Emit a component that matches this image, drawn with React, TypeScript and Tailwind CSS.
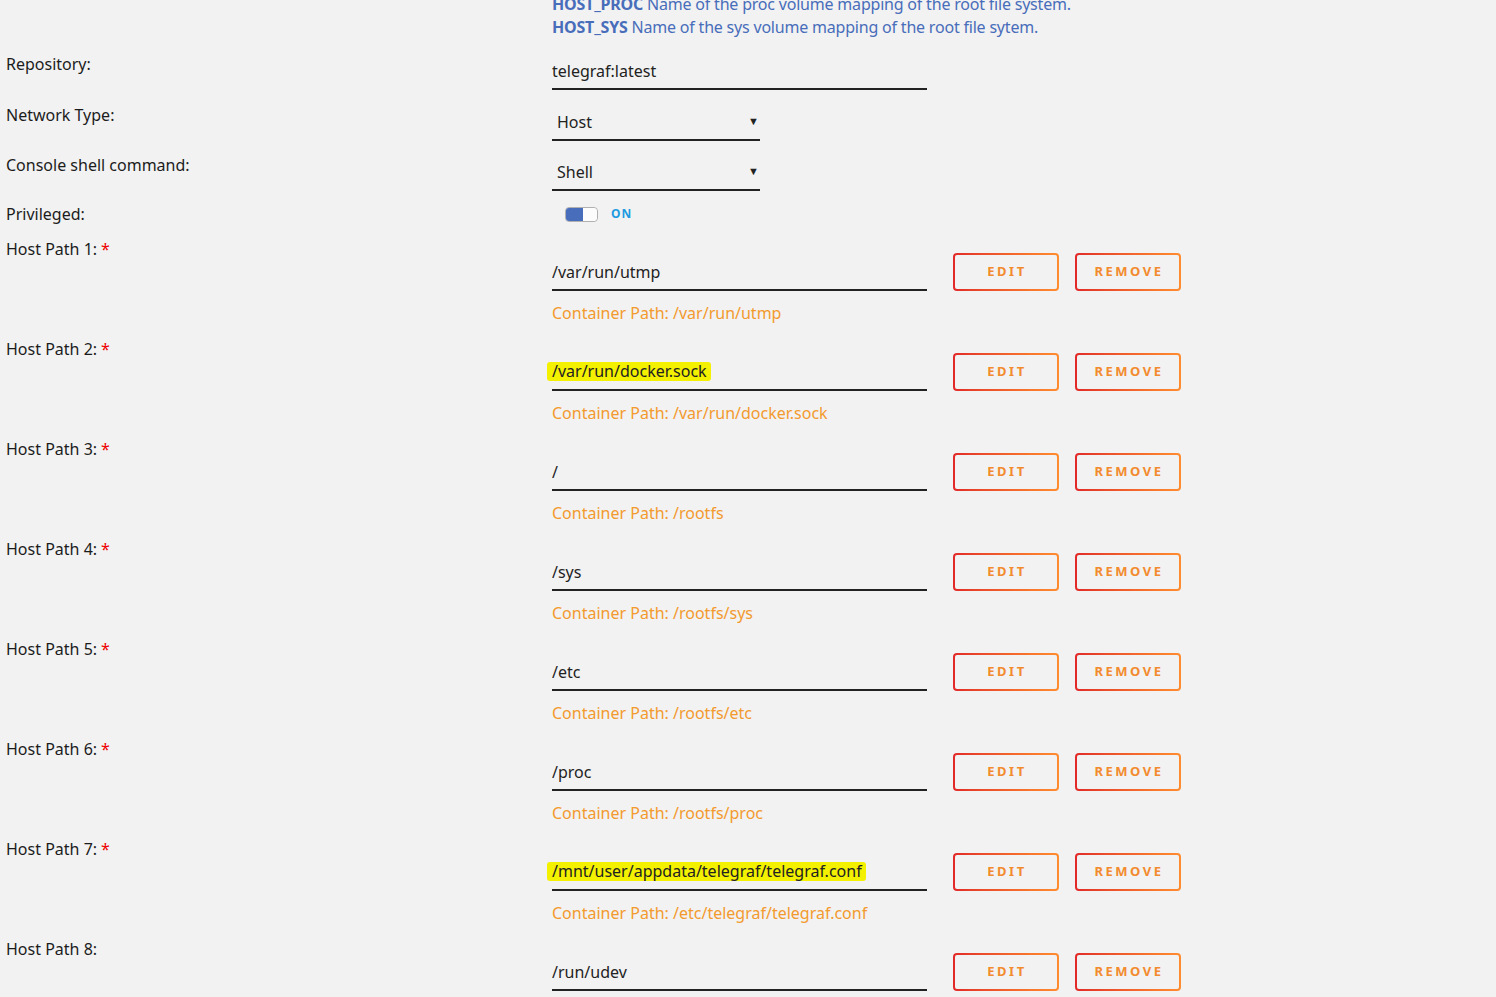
import React from "react";

interface HostPath { host: string; container?: string; mark?: boolean; }

const paths: HostPath[] = [
  { host: "/var/run/utmp", container: "/var/run/utmp" },
  { host: "/var/run/docker.sock", container: "/var/run/docker.sock", mark: true },
  { host: "/", container: "/rootfs" },
  { host: "/sys", container: "/rootfs/sys" },
  { host: "/etc", container: "/rootfs/etc" },
  { host: "/proc", container: "/rootfs/proc" },
  { host: "/mnt/user/appdata/telegraf/telegraf.conf", container: "/etc/telegraf/telegraf.conf", mark: true },
  { host: "/run/udev" },
];

function OutlineButton({ label }: { label: string }) {
  return (
    <div className="h-[38px] w-[106px] rounded-[4px] bg-gradient-to-r from-[#e22828] to-[#ff8c2f] p-[2px]">
      <div className="flex h-full w-full items-center justify-center rounded-[2px] bg-[#f2f2f2] pl-[2px] text-[13px] font-bold tracking-[2.5px] text-[#f28a2e]">
        {label}
      </div>
    </div>
  );
}

function Select({ value }: { value: string }) {
  return (
    <div className="flex h-[37px] w-[208px] items-center justify-between border-b-2 border-[#222] pl-[5px] pr-[1px] text-[#222]">
      <span>{value}</span>
      <span className="text-[11px]">▼</span>
    </div>
  );
}

export default function App() {
  return (
    <div className="min-h-screen overflow-hidden bg-[#f2f2f2] text-[16px] text-[#1c1c1c]" style={{ fontFamily: '"Noto Sans", "Liberation Sans", sans-serif' }}>
      {/* description */}
      <div className="mt-[-7px] pl-[552px] leading-[23px] tracking-[-0.2px] text-[#486dba]">
        <div><b>HOST_PROC</b> Name of the proc volume mapping of the root file system.</div>
        <div><b>HOST_SYS</b> Name of the sys volume mapping of the root file sytem.</div>
      </div>

      <div className="mt-[11px] flex h-[51px]">
        <div className="w-[552px] pl-[6px] leading-[28px]">Repository:</div>
        <div className="mt-[3px] flex h-[37px] w-[375px] items-center border-b-2 border-[#222] text-[#222]">telegraf:latest</div>
      </div>

      <div className="flex h-[50px]">
        <div className="w-[552px] pl-[6px] leading-[28px]">Network Type:</div>
        <div className="mt-[3px]"><Select value="Host" /></div>
      </div>

      <div className="flex h-[49px]">
        <div className="w-[552px] pl-[6px] leading-[28px]">Console shell command:</div>
        <div className="mt-[3px]"><Select value="Shell" /></div>
      </div>

      <div className="flex h-[35px]">
        <div className="w-[552px] pl-[6px] leading-[28px]">Privileged:</div>
        <div className="flex h-[28px] items-center pl-[13px]">
          <div className="flex h-[15px] w-[33px] overflow-hidden rounded-[4px] border border-[#b0b0b0] bg-white">
            <div className="w-[17px] bg-[#486dba]" />
            <div className="flex-1 rounded-[4px] bg-[#fcfcfc]" />
          </div>
          <span className="ml-[13px] text-[12px] leading-[14px] font-bold tracking-[1px] text-[#1e9be0]">ON</span>
        </div>
      </div>

      {paths.map((p, i) => (
        <div key={i} className="flex h-[100px]">
          <div className="w-[552px] pl-[6px] leading-[28px]">
            Host Path {i + 1}:{p.container && <span className="ml-[4px] text-[#e00]">*</span>}
          </div>
          <div className="pt-[18px]">
            <div className="flex items-end">
              <div className="flex h-[37px] w-[375px] items-center border-b-2 border-[#222] text-[#222]">
                {p.mark ? (
                  <span className="ml-[-5px] inline-block h-[19px] rounded-[3px] bg-[#f3f000] pl-[5px] pr-[4px] leading-[19px]">{p.host}</span>
                ) : (
                  <span>{p.host}</span>
                )}
              </div>
              <div className="ml-[26px]"><OutlineButton label="EDIT" /></div>
              <div className="ml-[16px]"><OutlineButton label="REMOVE" /></div>
            </div>
            {p.container && (
              <div className="mt-[12px] leading-[20px] text-[#f29a2e]">Container Path: {p.container}</div>
            )}
          </div>
        </div>
      ))}
    </div>
  );
}
